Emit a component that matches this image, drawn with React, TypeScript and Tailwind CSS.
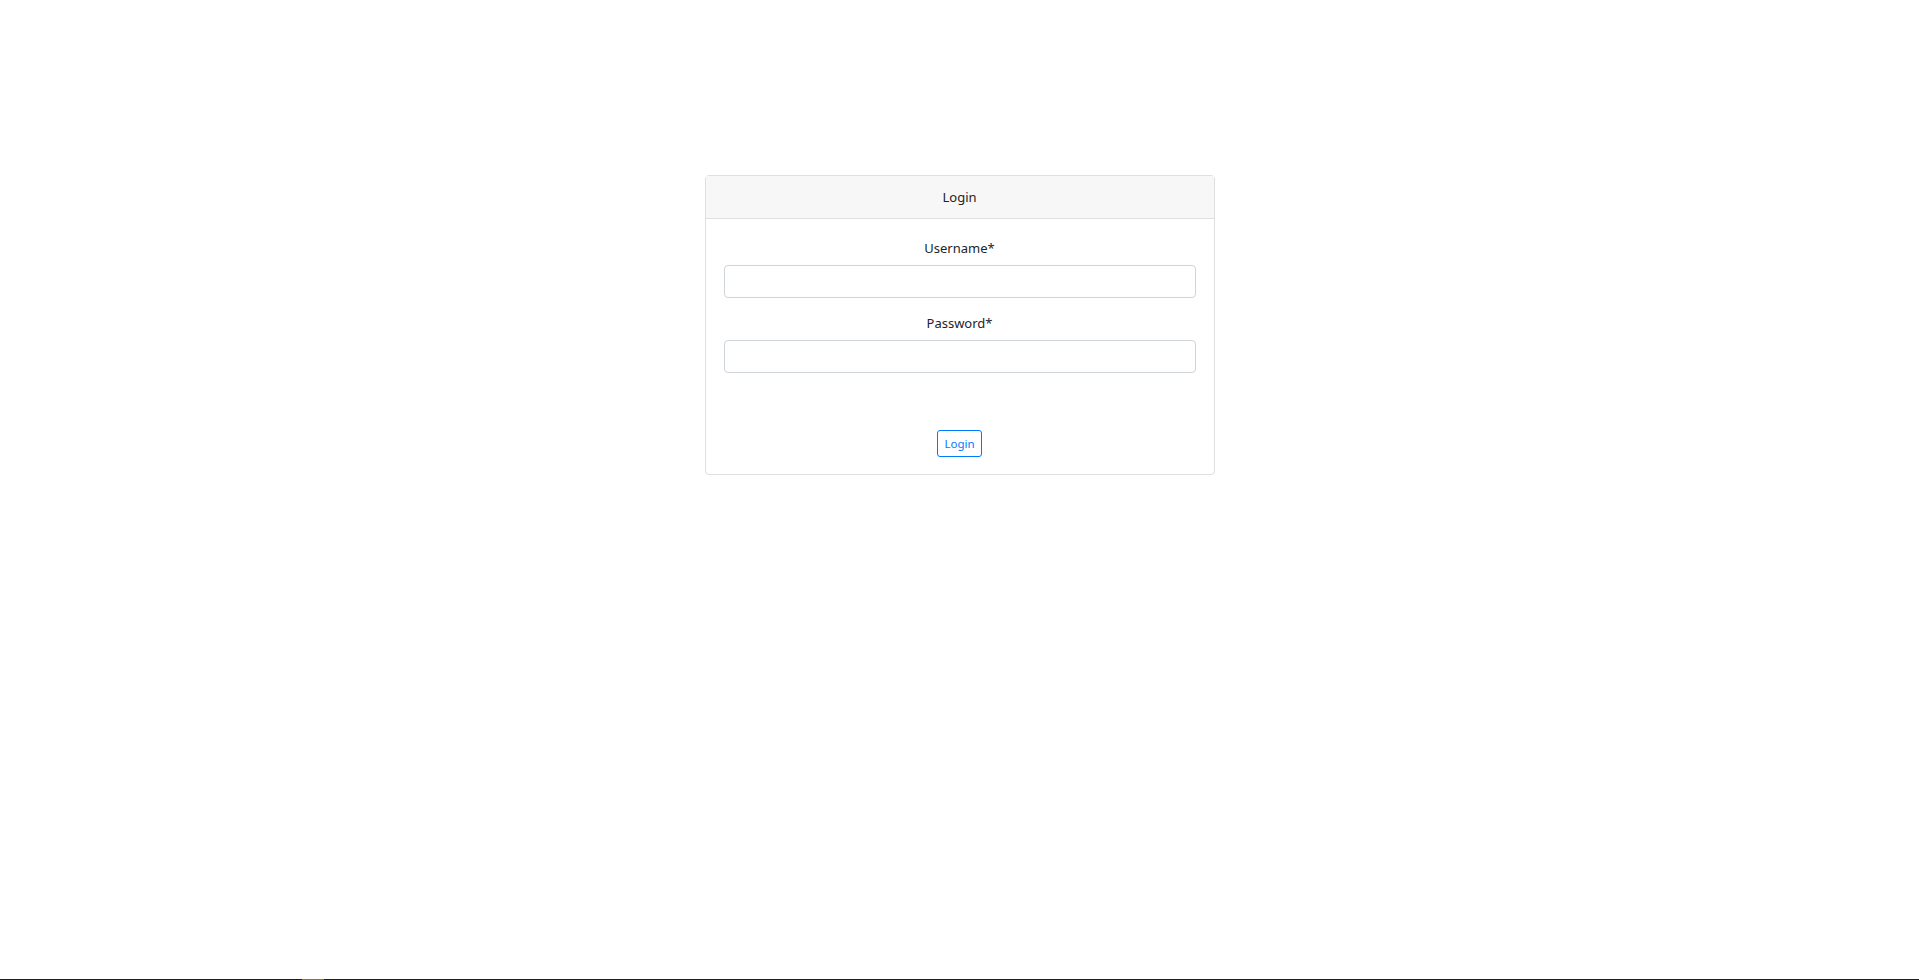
import React, { useState } from 'react';

const font = { fontFamily: '"Noto Sans", "Open Sans", Arial, sans-serif' };

const Field: React.FC<{ label: string; type: string; value: string; onChange: (v: string) => void; first?: boolean }> = ({ label, type, value, onChange, first }) => (
  <div className={first ? '' : 'mt-[14px]'}>
    <label className="block h-[21px] pt-[1px] text-center text-[13px] leading-[21px] text-[#212529]">{label}</label>
    <input
      type={type}
      value={value}
      onChange={e => onChange(e.target.value)}
      className="mt-[7px] block h-[33px] w-full rounded-[4px] border border-[#ced4da] bg-white px-3 text-[14px] text-[#495057] outline-none focus:border-[#80bdff]"
    />
  </div>
);

const App: React.FC = () => {
  const [username, setUsername] = useState('');
  const [password, setPassword] = useState('');

  return (
    <div className="flex h-screen flex-col bg-white" style={font}>
      <main className="flex flex-1 justify-center pt-[175px]">
        <div className="h-fit w-[510px] rounded-[4px] border border-[#dfdfdf] bg-white">
          <div className="flex h-[43px] items-center justify-center border-b border-[#dfdfdf] bg-[#f7f7f7] pt-[2px] text-[13px] text-[#212529]">
            Login
          </div>
          <form className="px-[18px] pt-[18px] pb-[17px]" onSubmit={e => e.preventDefault()}>
            <Field label="Username*" type="text" value={username} onChange={setUsername} first />
            <Field label="Password*" type="password" value={password} onChange={setPassword} />
            <div className="mt-[57px] flex justify-center">
              <button
                type="submit"
                className="h-[27px] w-[45px] rounded-[3px] border border-[#007bff] bg-white text-[11.5px] text-[#007bff] hover:bg-[#007bff] hover:text-white"
              >
                Login
              </button>
            </div>
          </form>
        </div>
      </main>
      <div className="flex h-px w-full bg-[#1e1e1e]">
        <div className="w-[302px]" />
        <div className="w-[22px] bg-[#7d7a3c]" />
      </div>
    </div>
  );
};

export default App;
